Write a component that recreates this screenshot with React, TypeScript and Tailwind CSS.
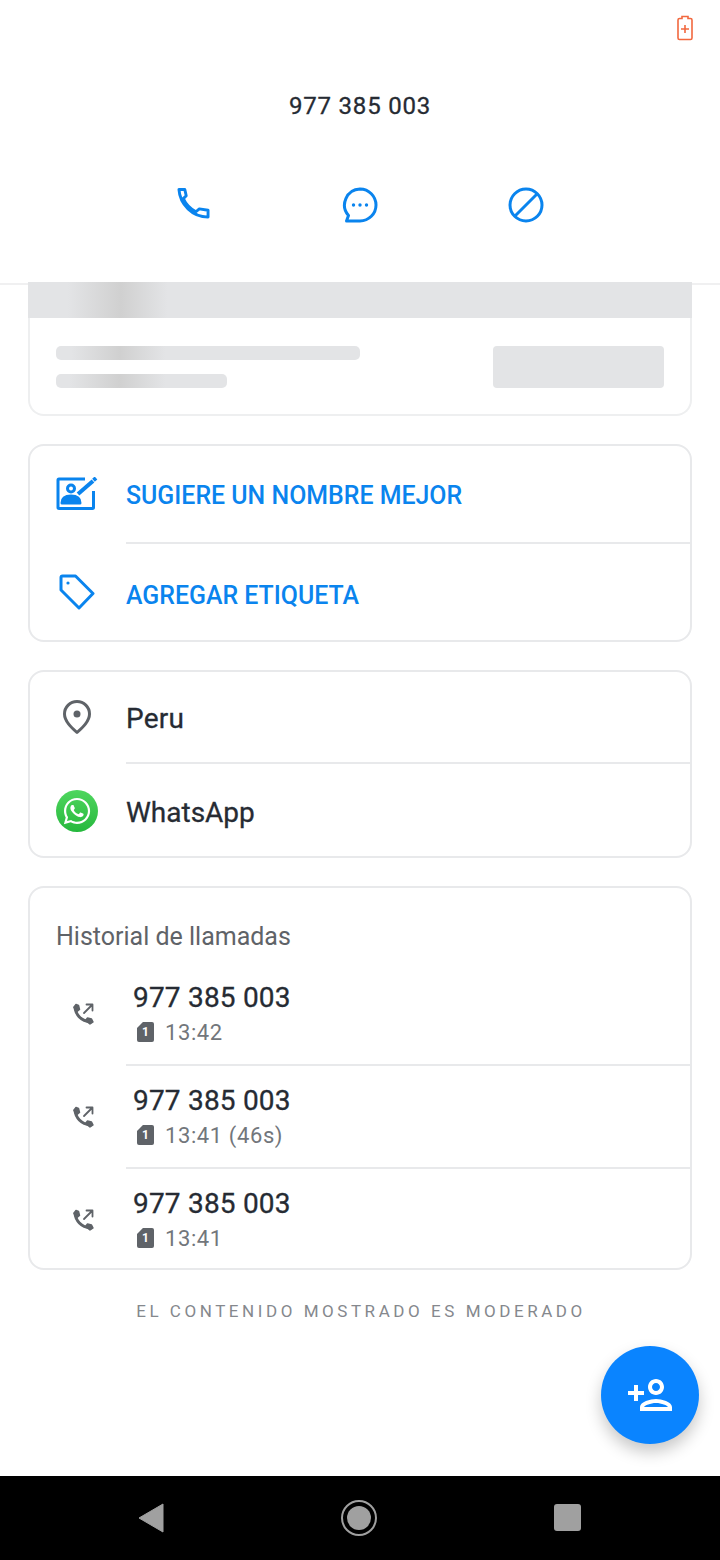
import React from 'react';
import { FaWhatsapp } from 'react-icons/fa';
import { MdOutlinePersonAdd } from 'react-icons/md';

function BatteryIcon() {
  return (
    <svg width="18" height="26" viewBox="0 0 18 26" fill="none" stroke="#f2683f" strokeWidth="1.6">
      <path d="M6 3.5V1.5h6v2h2.5a1.5 1.5 0 0 1 1.5 1.5v18a1.5 1.5 0 0 1-1.5 1.5h-11A1.5 1.5 0 0 1 2 23V5a1.5 1.5 0 0 1 1.5-1.5z" />
      <path d="M9 10v8M5 14h8" />
    </svg>
  );
}

function PhoneIcon() {
  return (
    <svg className="mr-[2px]" width="33" height="33" viewBox="0 0 34 34" fill="none" stroke="#0a84ee" strokeWidth="3" strokeLinejoin="round">
      <path d="M2 2.5h6l1.500 6.500-3 3c2.500 5.500 7 10.500 13 13.500l3.500-3 9 1.500v7C16 31 3 18 2 2.500z" />
    </svg>
  );
}

function ChatIcon() {
  return (
    <svg width="36" height="36" viewBox="0 0 36 36" fill="none">
      <path d="M18 2a16 16 0 1 1 0 32H4.5l2-5.5A16 16 0 0 1 18 2z" stroke="#0a84ee" strokeWidth="3" strokeLinejoin="round" />
      <circle cx="11.5" cy="18" r="1.7" fill="#0a84ee" />
      <circle cx="18" cy="18" r="1.7" fill="#0a84ee" />
      <circle cx="24.5" cy="18" r="1.7" fill="#0a84ee" />
    </svg>
  );
}

function BlockIcon() {
  return (
    <svg width="36" height="36" viewBox="0 0 36 36" fill="none" stroke="#0a84ee" strokeWidth="3">
      <circle cx="18" cy="18" r="16" />
      <path d="M7 29 29 7" />
    </svg>
  );
}

function EditContactIcon() {
  return (
    <svg width="42" height="34" viewBox="0 0 42 34" fill="none" stroke="#0a84ee" strokeWidth="3" strokeLinejoin="round">
      <path d="M29 2H3a1 1 0 0 0-1 1v27.500a1 1 0 0 0 1 1h33.500a1 1 0 0 0 1-1V14" />
      <circle cx="15" cy="11.5" r="3.5" />
      <path d="M6 26c0-5 4-7 9-7s9 2 9 7z" fill="#0a84ee" />
      <path d="M22 17 37 4" strokeWidth="4" />
      <path d="M37.5 3.2 40 1" strokeWidth="4" />
    </svg>
  );
}

function TagIcon() {
  return (
    <svg width="36" height="36" viewBox="0 0 36 36" fill="none" stroke="#0a84ee" strokeWidth="3" strokeLinejoin="round">
      <path d="M2 3.5A1.5 1.5 0 0 1 3.5 2h13L34 19.5 20 34 2 16z" />
      <circle cx="9" cy="9" r="1.6" fill="#0a84ee" stroke="none" />
    </svg>
  );
}

function PinIcon() {
  return (
    <svg width="30" height="36" viewBox="0 0 30 36" fill="none">
      <path d="M15 33.5C9 28 2.5 22 2.5 15a12.5 12.5 0 0 1 25 0c0 7-6.500 13-12.500 18.500z" stroke="#5f6368" strokeWidth="3" strokeLinejoin="round" />
      <circle cx="15" cy="15" r="3.500" fill="#5f6368" />
    </svg>
  );
}

function WhatsAppBadge() {
  return (
    <div className="flex h-[42px] w-[42px] items-center justify-center rounded-full bg-gradient-to-b from-[#4ed65e] to-[#25b83d]">
      <FaWhatsapp size={30} color="#ffffff" />
    </div>
  );
}

function OutgoingCallIcon() {
  return (
    <svg width="24" height="24" viewBox="0 0 24 24" fill="none" stroke="#5f6368" strokeLinecap="round" strokeLinejoin="round">
      <path d="M4 5c.5 7.500 6 14 15.500 15" strokeWidth="3" />
      <path d="M3 5.500 5 2.500l2.500 1 1 4L6 9.500zM14.500 18.500l2-2.500 4 1 1.500 3-3 2z" fill="#5f6368" strokeWidth="1.500" />
      <path d="M13 11 21.500 2.500M15.500 2.500h6v6" strokeWidth="1.800" />
    </svg>
  );
}

function SimIcon() {
  return (
    <div className="mb-[2px] flex h-[20px] w-[17px] items-center justify-center rounded-[2px] bg-[#5f6368] text-[12px] font-bold leading-none text-white [clip-path:polygon(35%_0,100%_0,100%_100%,0_100%,0_30%)]">
      1
    </div>
  );
}

function CallRow({ time, last }: { time: string; last?: boolean }) {
  return (
    <div className={`flex gap-[38px] pl-[41px] pt-[18px] ${last ? 'h-[99px]' : 'h-[101px]'}`}>
      <div className="flex h-[66px] w-[24px] items-center">
        <OutgoingCallIcon />
      </div>
      <div>
        <div className="pt-[1px] text-[28px] leading-[32px] tracking-[0.2px] text-[#262b33] [-webkit-text-stroke:0.3px_#262b33]">977 385 003</div>
        <div className="mt-[5px] flex h-[28px] items-center pl-[4px]">
          <SimIcon />
          <span className="ml-[11px] text-[22px] leading-[28px] tracking-[0.6px] text-[#72767b]">{time}</span>
        </div>
      </div>
    </div>
  );
}

function Divider() {
  return <div className="ml-[96px] h-[2px] bg-[#e8e9eb]" />;
}

export default function App() {
  return (
    <div className="relative flex h-[1560px] w-[720px] flex-col overflow-hidden bg-white font-['Roboto',sans-serif]">
      {/* Header */}
      <div className="h-[285px] shrink-0 border-b-2 border-[#f0f0f1] bg-white">
        <div className="flex justify-end pr-[26px] pt-[15px]">
          <BatteryIcon />
        </div>
        <div className="mt-[49px] text-center text-[24px] leading-[32px] tracking-[0.8px] text-[#262b33] [-webkit-text-stroke:0.3px_#262b33]">977 385 003</div>
        <div className="mt-[65px] flex justify-center gap-[130px]">
          <PhoneIcon />
          <ChatIcon />
          <BlockIcon />
        </div>
      </div>

      <div className="flex flex-1 flex-col px-[28px]">
        {/* Loading card */}
        <div className="mt-[-3px]">
          <div className="h-[36px] bg-[linear-gradient(90deg,#e3e4e6_6%,#d0d0d0_14%,#e3e4e6_21%)]" />
          <div className="flex h-[98px] justify-between rounded-b-[16px] border-2 border-t-0 border-[#eeeff0] pl-[26px] pr-[26px] pt-[28px]">
            <div>
              <div className="h-[14px] w-[304px] rounded-[5px] bg-[linear-gradient(90deg,#e3e4e6_5%,#d0d0d0_21%,#e3e4e6_36%)]" />
              <div className="mt-[14px] h-[14px] w-[171px] rounded-[5px] bg-[linear-gradient(90deg,#e3e4e6_8%,#d0d0d0_37%,#e3e4e6_64%)]" />
            </div>
            <div className="h-[42px] w-[171px] rounded-[4px] bg-[#e3e4e6]" />
          </div>
        </div>

        {/* Actions */}
        <div className="mt-[28px] rounded-[16px] border-2 border-[#e8e9eb]">
          <div className="flex h-[96px] items-center">
            <div className="flex w-[96px] justify-start pl-[26px]">
              <EditContactIcon />
            </div>
            <span className="mt-[3px] text-[24.9px] font-medium text-[#0a84ee]">SUGIERE UN NOMBRE MEJOR</span>
          </div>
          <Divider />
          <div className="flex h-[96px] items-center">
            <div className="flex w-[96px] justify-start pl-[29px]">
              <TagIcon />
            </div>
            <span className="mt-[8px] text-[24.9px] font-medium text-[#0a84ee]">AGREGAR ETIQUETA</span>
          </div>
        </div>

        {/* Info */}
        <div className="mt-[28px] rounded-[16px] border-2 border-[#e8e9eb]">
          <div className="flex h-[90px] items-center">
            <div className="flex w-[96px] justify-start pl-[32px]">
              <PinIcon />
            </div>
            <span className="mt-[3px] text-[28px] tracking-[0.2px] text-[#262b33] [-webkit-text-stroke:0.3px_#262b33]">Peru</span>
          </div>
          <Divider />
          <div className="flex h-[92px] items-center">
            <div className="mt-[2px] flex w-[96px] justify-start pl-[26px]">
              <WhatsAppBadge />
            </div>
            <span className="mt-[5px] text-[28px] text-[#262b33] [-webkit-text-stroke:0.3px_#262b33]">WhatsApp</span>
          </div>
        </div>

        {/* Call history */}
        <div className="mt-[28px] rounded-[16px] border-2 border-[#e8e9eb]">
          <div className="h-[75px] pl-[26px] pt-[33px] text-[25px] leading-[32px] text-[#5f6368]">Historial de llamadas</div>
          <CallRow time="13:42" />
          <Divider />
          <CallRow time="13:41 (46s)" />
          <Divider />
          <CallRow time="13:41" last />
        </div>

        <div className="mt-[29px] pl-[2px] text-center text-[17px] leading-[24px] tracking-[3.55px] text-[#85888d]">EL CONTENIDO MOSTRADO ES MODERADO</div>
      </div>

      {/* Nav bar */}
      <div className="flex h-[84px] shrink-0 items-center justify-between bg-black pb-[1px] pl-[138px] pr-[139px]">
        <svg width="26" height="30" viewBox="0 0 26 30" fill="#a0a0a0">
          <path d="M25 1v28L1 15z" stroke="#a0a0a0" strokeLinejoin="round" />
        </svg>
        <svg width="36" height="36" viewBox="0 0 36 36" fill="#a0a0a0">
          <circle cx="18" cy="18" r="17" fill="none" stroke="#a0a0a0" strokeWidth="2" />
          <circle cx="18" cy="18" r="12" />
        </svg>
        <div className="h-[27px] w-[27px] rounded-[3px] bg-[#a0a0a0]" />
      </div>

      {/* FAB */}
      <div className="absolute left-[601px] top-[1346px] flex h-[98px] w-[98px] items-center justify-center rounded-full bg-[#0a84ff] shadow-[0_8px_16px_rgba(0,0,0,0.22)]">
        <MdOutlinePersonAdd size={48} color="#ffffff" />
      </div>
    </div>
  );
}
